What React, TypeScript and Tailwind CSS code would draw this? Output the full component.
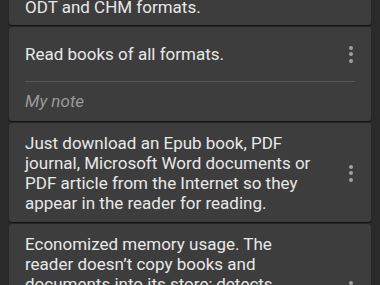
import React from "react";

function Kebab() {
  return (
    <div className="flex w-[20px] shrink-0 flex-col items-center gap-[2.5px]">
      <span className="block h-[4px] w-[4px] rounded-full bg-[#a0a0a0]" />
      <span className="block h-[4px] w-[4px] rounded-full bg-[#a0a0a0]" />
      <span className="block h-[4px] w-[4px] rounded-full bg-[#a0a0a0]" />
    </div>
  );
}

const card = "rounded-[3px] bg-[#3d3d3d] shadow-[0_1px_1px_rgba(0,0,0,0.6)]";
const body = "flex-1 text-[17px] leading-[20px] text-[#e8e8e8]";

export default function App() {
  return (
    <div className="h-[285px] w-[380px] overflow-hidden bg-[#2a2a2a]" style={{ fontFamily: "Roboto, 'Noto Sans', sans-serif" }}>
      <div className="mt-[-33px] flex flex-col gap-[2px] px-[9px]">
        <div className={card}>
          <div className="pb-[8px] pl-[16px] pr-[52px] pt-[10px] text-[17px] leading-[20px] text-[#e8e8e8]">
            Supports EPUB, PDF, DJVU, FB2, DOC,
            <br />
            ODT and CHM formats.
          </div>
        </div>
        <div className={card}>
          <div className="flex h-[54px] items-center pl-[16px] pr-[10px]">
            <div className={body}>Read books of all formats.</div>
            <Kebab />
          </div>
          <div className="px-[16px]">
            <div className="h-px bg-[#575757]" />
            <div className="flex h-[39px] items-center text-[17px] italic text-[#9a9a9a]">My note</div>
          </div>
        </div>
        <div className={card}>
          <div className="flex items-center pb-[9px] pl-[16px] pr-[10px] pt-[10px]">
            <div className={body + " pr-[26px]"}>
              Just download an Epub book, PDF journal, Microsoft Word documents or PDF article from the Internet so they appear in the reader for reading.
            </div>
            <Kebab />
          </div>
        </div>
        <div className={card}>
          <div className="flex items-center pl-[16px] pr-[10px]">
            <div className={body + " pb-[21px] pr-[26px] pt-[10px]"}>
              Economized memory usage. The reader doesn’t copy books and documents into its store; detects them on the device and opens them in a couple of taps.
            </div>
            <Kebab />
          </div>
        </div>
      </div>
    </div>
  );
}
